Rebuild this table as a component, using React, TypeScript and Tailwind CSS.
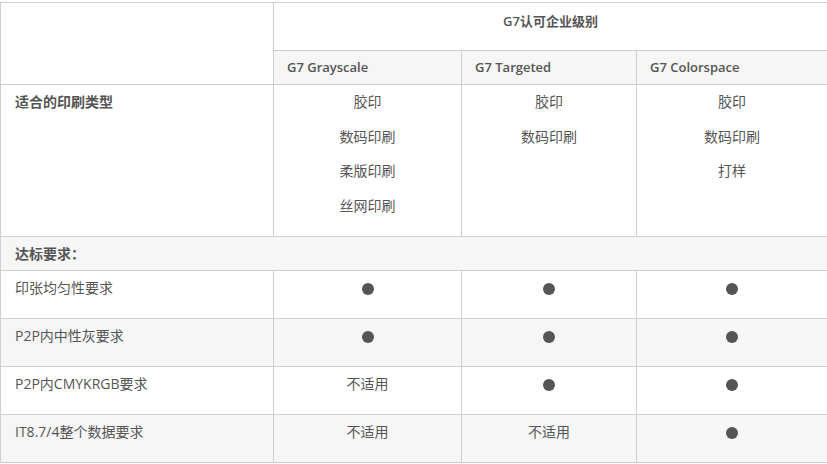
const LEVELS = ['G7 Grayscale', 'G7 Targeted', 'G7 Colorspace'];

const PRINT_TYPES = [
  ['胶印', '数码印刷', '柔版印刷', '丝网印刷'],
  ['胶印', '数码印刷'],
  ['胶印', '数码印刷', '打样'],
];

// true = dot, string = text
const REQUIREMENTS: { label: string; values: (true | string)[] }[] = [
  { label: '印张均匀性要求', values: [true, true, true] },
  { label: 'P2P内中性灰要求', values: [true, true, true] },
  { label: 'P2P内CMYKRGB要求', values: ['不适用', true, true] },
  { label: 'IT8.7/4整个数据要求', values: ['不适用', '不适用', true] },
];

function Dot() {
  return <span className="inline-block h-3 w-3 rounded-full bg-[#555] align-middle" />;
}

export default function App() {
  return (
    <div className="min-h-screen bg-white pt-[2px] font-['Open_Sans','Noto_Sans_CJK_SC',sans-serif] text-[14px] text-[#555]">
      <table className="w-[827px] table-fixed border-collapse">
        <colgroup>
          <col className="w-[273px]" />
          <col className="w-[188px]" />
          <col className="w-[175px]" />
          <col className="w-[191px]" />
        </colgroup>
        <tbody>
          <tr className="h-[48px]">
            <td rowSpan={2} className="border border-[#cfcfcf] bg-white" />
            <td
              colSpan={3}
              className="border border-[#cfcfcf] bg-white pt-[1px] text-center align-top font-semibold leading-[34px] text-[13px]"
            >
              G7认可企业级别
            </td>
          </tr>
          <tr className="h-[34px]">
            {LEVELS.map((l) => (
              <td
                key={l}
                className="border border-[#cfcfcf] bg-[#f6f6f6] px-[13px] align-middle text-[13px] font-semibold"
              >
                {l}
              </td>
            ))}
          </tr>
          <tr className="h-[152px]">
            <td className="border border-[#cfcfcf] px-[14px] align-top font-bold leading-[34px]">
              适合的印刷类型
            </td>
            {PRINT_TYPES.map((items, i) => (
              <td key={i} className="border border-[#cfcfcf] text-center align-top leading-[34.5px]">
                {items.map((t) => (
                  <div key={t}>{t}</div>
                ))}
              </td>
            ))}
          </tr>
          <tr className="h-[34px] bg-[#f6f6f6]">
            <td colSpan={4} className="border border-[#cfcfcf] px-[14px] align-middle font-bold">
              达标要求：
            </td>
          </tr>
          {REQUIREMENTS.map((r, i) => (
            <tr key={r.label} className={i % 2 === 1 ? 'h-[48px] bg-[#f6f6f6]' : 'h-[48px] bg-white'}>
              <td className="border border-[#cfcfcf] px-[14px] align-top leading-[34px]">{r.label}</td>
              {r.values.map((v, j) => (
                <td key={j} className="border border-[#cfcfcf] text-center align-top leading-[34px]">
                  {v === true ? <Dot /> : v}
                </td>
              ))}
            </tr>
          ))}
        </tbody>
      </table>
    </div>
  );
}
